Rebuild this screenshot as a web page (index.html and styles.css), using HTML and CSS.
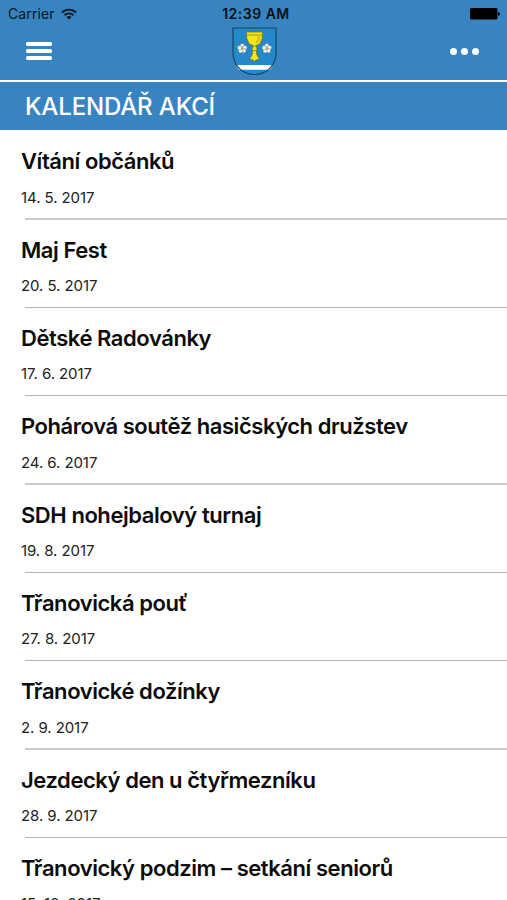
FILE: index.html
```html
<!DOCTYPE html>
<html lang="cs">
  <head>
    <meta charset="UTF-8" />
    <meta name="viewport" content="width=device-width, initial-scale=1.0" />
    <title>Kalendář akcí</title>
    <link rel="stylesheet" href="styles.css">
  </head>
  <body>
    <header>
      <div class="status">
        <div class="carrier">
          <span class="carrier-name">Carrier</span>
          <svg class="wifi" width="16" height="12" viewBox="0 0 16 12">
            <g fill="none" stroke="#071722" stroke-width="1.9">
              <path d="M1 4.5a10 10 0 0 1 14 0" />
              <path d="M3.6 7.2a6.3 6.3 0 0 1 8.8 0" />
            </g>
            <path d="M8 11.6L5.5 9.1a3.6 3.6 0 0 1 5 0z" fill="#071722" />
          </svg>
        </div>
        <span class="clock">12:39 AM</span>
        <svg class="battery" width="30" height="13" viewBox="0 0 30 13">
          <rect x="0" y="1" width="27.5" height="11.5" rx="1.5" />
          <path d="M28 5q2 .3 2 1.9t-2 1.9z" />
        </svg>
      </div>

      <nav>
        <button class="menu" aria-label="Menu">
          <span></span>
          <span></span>
          <span></span>
        </button>
        <svg class="crest" width="45" height="49" viewBox="0 0 45 49">
          <path d="M1 1h43v25c0 11-8 21.5-21.5 21.5S1 37 1 26z" fill="#2389cb" />
          <path d="M4 38h37q-1 2.500-3 4.700H7Q5 40.500 4 38z" fill="#fff" />
          <path d="M1 1h43v25c0 11-8 21.5-21.5 21.5S1 37 1 26z" fill="none" stroke="#174664" stroke-width="1.2" />
          <path d="M14.500 5h16q.7 7-2.500 11.500-2 1.500-4 2l.3 2q1.500 1.500 0 3l.5 4q.7 2.500 2.500 3.300l-.8 1.700-2.500.5-1.500 1.500-1.500-1.500-2.500-.5-.8-1.700q1.800-.8 2.500-3.300l.5-4q-1.500-1.500 0-3l.3-2q-2-.5-4-2Q13.800 12 14.500 5z" fill="#f4e51b" stroke="#696b1b" stroke-width=".7" />
          <path d="M14.500 8h16M20.500 19h4M20.500 23.500h4" stroke="#817e19" stroke-width=".7" />
          <path d="M27 9q.5 4-2.500 7" fill="none" stroke="#d9bb16" stroke-width="2" />
          <defs>
            <g id="rose">
              <g fill="#f7faf8" stroke="#456779" stroke-width=".5">
                <circle cx="0" cy="-2.7" r="2.3" />
                <circle cx="2.6" cy="-.8" r="2.3" />
                <circle cx="1.6" cy="2.2" r="2.3" />
                <circle cx="-1.6" cy="2.2" r="2.3" />
                <circle cx="-2.6" cy="-.8" r="2.3" />
              </g>
              <circle r="1.3" fill="#b4ab62" />
            </g>
          </defs>
          <use href="#rose" x="10.2" y="21.5" />
          <use href="#rose" x="34.8" y="21.5" />
        </svg>
        <button class="more" aria-label="Více">
          <span></span>
          <span></span>
          <span></span>
        </button>
      </nav>
    </header>

    <h1>KALENDÁŘ AKCÍ</h1>

    <ul class="events">
      <li>
        <h2>Vítání občánků</h2>
        <time>14. 5. 2017</time>
      </li>
      <li>
        <h2>Maj Fest</h2>
        <time>20. 5. 2017</time>
      </li>
      <li>
        <h2>Dětské Radovánky</h2>
        <time>17. 6. 2017</time>
      </li>
      <li>
        <h2>Pohárová soutěž hasičských družstev</h2>
        <time>24. 6. 2017</time>
      </li>
      <li>
        <h2>SDH nohejbalový turnaj</h2>
        <time>19. 8. 2017</time>
      </li>
      <li>
        <h2>Třanovická pouť</h2>
        <time>27. 8. 2017</time>
      </li>
      <li>
        <h2>Třanovické dožínky</h2>
        <time>2. 9. 2017</time>
      </li>
      <li>
        <h2>Jezdecký den u čtyřmezníku</h2>
        <time>28. 9. 2017</time>
      </li>
      <li>
        <h2>Třanovický podzim – setkání seniorů</h2>
        <time>15. 10. 2017</time>
      </li>
    </ul>
  </body>
</html>
```
FILE: styles.css
```css
* {
  box-sizing: border-box;
}

body {
  background: #fff;
  color: #0c0c0c;
  font-family: Inter, "Liberation Sans", sans-serif;
  height: 100vh;
  margin: 0;
  overflow: hidden;
}

header {
  background: #3784c0;
  border-bottom: 2px solid #fff;
  height: 82px;
}

.status {
  align-items: center;
  color: #071722;
  display: grid;
  font-size: 14px;
  grid-template-columns: 1fr auto 1fr;
  height: 27px;
  padding: 0 7px 0 8px;
}

.carrier {
  align-items: center;
  display: flex;
  gap: 6px;
}

.carrier-name {
  letter-spacing: 0.1px;
}

.clock {
  color: #06111a;
  font-weight: 600;
  letter-spacing: 0.5px;
  padding-left: 4px;
}

.battery {
  fill: #000;
  justify-self: end;
}

nav {
  align-items: center;
  display: grid;
  grid-template-columns: 1fr auto 1fr;
  height: 49px;
  padding: 0 28px 0 26px;
}

button {
  background: none;
  border: 0;
  display: flex;
  padding: 0 0 1px;
}

.crest {
  margin-left: 3px;
}

.menu {
  flex-direction: column;
  gap: 3px;
  width: 26px;
}

.menu span {
  background: #fff;
  border-radius: 1.5px;
  height: 4px;
}

.more {
  gap: 4px;
  justify-self: end;
}

.more span {
  background: #fff;
  border-radius: 50%;
  height: 7px;
  width: 7px;
}

h1 {
  background: #3784c0;
  color: #fff;
  font-size: 24px;
  font-weight: 500;
  height: 48px;
  letter-spacing: -0.15px;
  line-height: 50px;
  margin: 0;
  padding-left: 25px;
}

.events {
  list-style: none;
  margin: 0;
  padding: 1.4px 0 0;
}

li {
  background: linear-gradient(#b5b5b5, #b5b5b5) 25px 100% / 100% 1px no-repeat;
  height: 88.33px;
  padding: 16px 0 0 21px;
}

li:nth-child(3n + 1) {
  background: linear-gradient(#cbcbcb, #cbcbcb) 25px 100% / 100% 2px no-repeat;
}

h2 {
  font-size: 22px;
  font-weight: 600;
  letter-spacing: -0.44px;
  line-height: 28px;
  margin: 0 0 12.2px;
  white-space: nowrap;
}

time {
  color: #222;
  display: block;
  font-size: 15px;
  letter-spacing: -0.08px;
  line-height: 20px;
}
```
